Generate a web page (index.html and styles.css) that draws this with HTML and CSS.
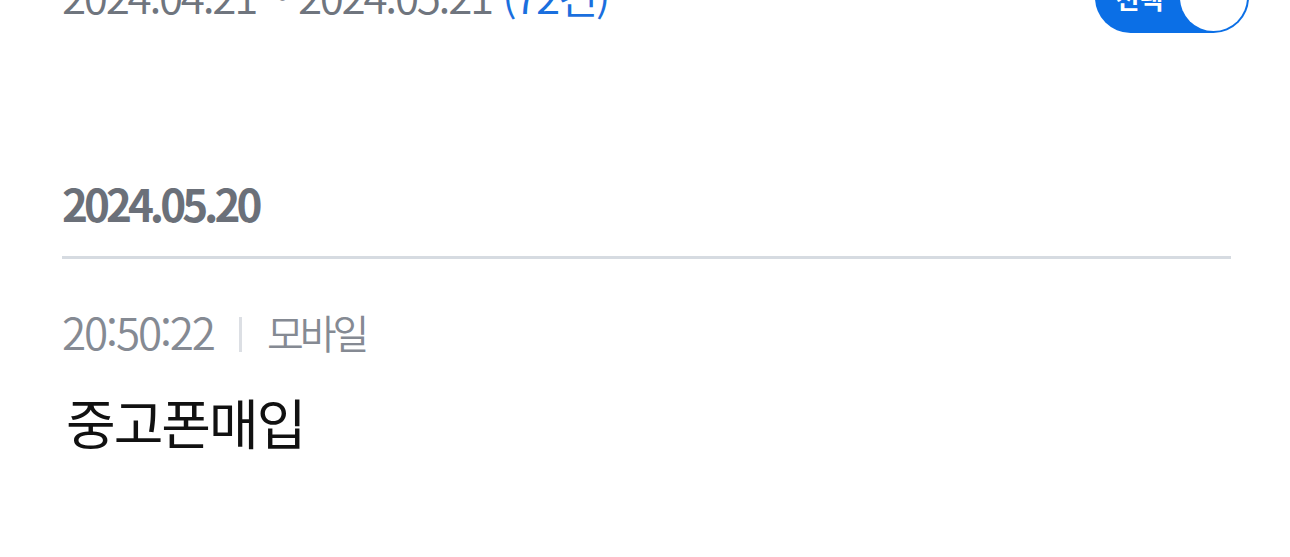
FILE: index.html
```html
<!DOCTYPE html>
<html lang="ko">
<head>
<meta charset="utf-8">
<link rel="stylesheet" href="styles.css">
</head>
<body>
<div class="page">
  <div class="header">
    <div class="range">2024.04.21 ~ 2024.05.21 <span class="count">(72건)</span></div>
    <div class="toggle"><span class="toggle-label">선택</span><span class="knob"></span></div>
  </div>
  <section class="day">
    <h2 class="day-title">2024.05.20</h2>
    <div class="entry">
      <div class="meta"><span class="time">20:50:22</span><span class="sep"></span><span class="device">모바일</span></div>
      <div class="entry-title">중고폰매입</div>
    </div>
  </section>
</div>
</body>
</html>
```

FILE: styles.css
```css
html, body {
  margin: 0;
  padding: 0;
  background: #ffffff;
  overflow: hidden;
}
body {
  font-family: "Noto Sans CJK KR", "Noto Sans", sans-serif;
  width: 1290px;
  height: 557px;
}
.page {
  padding: 0 59px 0 62px;
}
.header {
  display: flex;
  justify-content: space-between;
  align-items: center;
  margin-top: -38px;
  height: 71px;
}
.range {
  font-size: 44px;
  font-weight: 350;
  letter-spacing: -2.3px;
  color: #6f757e;
  line-height: 1;
  margin-top: -5px;
}
.count {
  color: #1a6fde;
}
.toggle {
  width: 154px;
  height: 71px;
  border-radius: 36px;
  background: #0b6fe6;
  display: flex;
  align-items: center;
  margin-right: -18px;
  flex-shrink: 0;
}
.toggle-label {
  flex: 1;
  text-align: center;
  color: #ffffff;
  font-size: 26px;
  font-weight: 700;
  line-height: 1;
  padding-left: 4px;
}
.knob {
  width: 67px;
  height: 67px;
  margin-right: 2px;
  border-radius: 50%;
  background: #ffffff;
  flex-shrink: 0;
}
.day {
  margin-top: 148px;
}
.day-title {
  margin: 0;
  font-size: 44px;
  font-weight: 700;
  letter-spacing: -4px;
  color: #6b7079;
  line-height: 1;
  padding-bottom: 31px;
  border-bottom: 3px solid #d6dbe1;
}
.entry {
  padding-top: 50px;
}
.meta {
  display: flex;
  align-items: flex-start;
  gap: 25px;
  color: #858a93;
  line-height: 1;
}
.time {
  font-size: 44px;
  font-weight: 350;
  letter-spacing: -2.1px;
}
.device {
  font-size: 40px;
  font-weight: 350;
  letter-spacing: -4px;
  margin-top: 3px;
}
.sep {
  width: 3px;
  height: 35px;
  margin-top: 8px;
  background: #dcdfe4;
}
.entry-title {
  margin-top: 42px;
  font-size: 54px;
  font-weight: 400;
  letter-spacing: -2px;
  color: #111111;
  line-height: 1;
  padding-left: 4px;
}
```
